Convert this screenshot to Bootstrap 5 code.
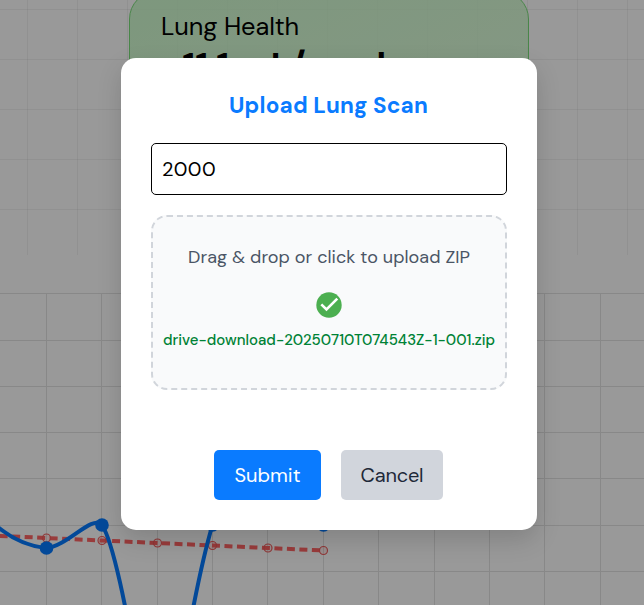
<!DOCTYPE html>
<html lang="en">
<head>
<meta charset="utf-8">
<meta name="viewport" content="width=device-width, initial-scale=1">
<title>Upload Lung Scan</title>
<link rel="stylesheet" href="https://cdn.jsdelivr.net/npm/bootstrap@5.3.0/dist/css/bootstrap.min.css">
<style>
body{font-family:"DM Sans",Inter,"Liberation Sans",sans-serif;height:605px;background:#fff}
.hero-grid{height:255px;padding-left:14px;background:repeating-linear-gradient(90deg,transparent 0 27px,rgba(0,0,0,.05) 27px 28px,transparent 28px 50px),repeating-linear-gradient(180deg,transparent 0 9px,rgba(0,0,0,.05) 9px 10px,transparent 10px 50px)}
.health-card{width:400px;height:200px;margin-top:-9px;padding:20px 31px;border:1px solid #7be07b;border-radius:28px;background:linear-gradient(155deg,rgba(198,252,198,.8),rgba(218,252,215,.8));color:#000}
.health-label{font-size:25.4px;line-height:30px;letter-spacing:-.1px}
.health-value{font-size:35.2px;line-height:48px;font-weight:800;padding-left:1px;margin-top:-1px}
.chart-area{height:350px}
.scrim{background:rgba(0,0,0,.4);padding:58px 0 0 14px}
.upload-panel{width:416px;height:472px;padding:30px;border-radius:15px;box-shadow:0 10px 25px rgba(0,0,0,.15)}
.upload-title{font-size:22.5px;line-height:34px;letter-spacing:.16px;color:#0a7bff;padding:1px 1px 0 0;margin-bottom:20px}
.year-input{height:52px;border:1px solid #000;border-radius:5px;padding:0 10px;font-size:20px;color:#000;letter-spacing:.4px}
.drop-zone{height:175px;margin-top:20px;border:2px dashed #d1d5db;border-radius:16px;background:#f9fafb;padding-top:27px}
.drop-hint{font-size:18px;line-height:27px;letter-spacing:.07px;color:#4a5565}
.check-icon{margin:21px 0 10px}
.file-name{font-size:15px;line-height:24px;font-weight:500;color:#008236}
.action-row{gap:20px;margin:60px 1px 0 0}
.action-btn{height:50px;padding:0;border:0;border-radius:5px;font-size:20px}
.submit-btn{width:107px;background:#0a7bff;color:#fff}
.cancel-btn{width:102px;background:#d1d5dc;color:#1e2939;letter-spacing:-.2px}
</style>
</head>
<body class="overflow-hidden position-relative">
<main>
  <section class="hero-grid d-flex justify-content-center">
    <div class="health-card">
      <div class="health-label"><span>Lung Health</span></div>
      <div class="health-value text-nowrap">-11.1 mL/week</div>
    </div>
  </section>
  <section class="chart-area">
    <svg class="d-block" width="644" height="350" viewBox="0 255 644 350" aria-label="Lung volume chart">
      <path stroke="#e3e3e3" stroke-width="1" fill="none" d="M0 293.5H644M0 340.5H644M0 386.5H644M0 432.5H644M0 478.5H644M0 525.5H644M0 571.5H644M46.5 293V605M101.5 293V605M157.5 293V605M212.5 293V605M267.5 293V605M323.5 293V605M378.5 293V605M434.5 293V605M489.5 293V605M544.5 293V605M600.5 293V605"/>
      <path stroke="#ff6464" stroke-width="4" stroke-dasharray="8 4.5" fill="none" d="M-12.8 535.3L46.5 538L101.5 540.5L157.5 543L212.5 545.5L267.5 548L323.5 550.5"/>
      <g fill="#ff6464" fill-opacity=".12" stroke="#f05c5c" stroke-width="1.2"><circle cx="46.5" cy="538" r="4"/><circle cx="102" cy="540.5" r="4"/><circle cx="157.5" cy="543" r="4"/><circle cx="212.5" cy="545.5" r="4"/><circle cx="268" cy="548" r="4"/><circle cx="323.5" cy="550.5" r="4"/></g>
      <path stroke="#067bff" stroke-width="4" fill="none" d="M-9 521C8 537 25 546 46.5 548C68 546 92 514 102 525C112 540 128 610 137 680M180 680C192 610 204 553 212.5 525"/>
      <g fill="#067bff"><circle cx="46.5" cy="548" r="6.8"/><circle cx="102" cy="525" r="6.8"/><circle cx="212.5" cy="525" r="6.8"/><circle cx="323.5" cy="525" r="6.8"/></g>
    </svg>
  </section>
</main>
<div class="scrim position-absolute top-0 start-0 w-100 h-100 d-flex justify-content-center align-items-start">
  <div class="upload-panel bg-white text-center" role="dialog">
    <h2 class="upload-title fw-bold">Upload Lung Scan</h2>
    <input class="year-input form-control" value="2000" aria-label="Volume">
    <div class="drop-zone d-flex flex-column align-items-center">
      <div class="drop-hint text-nowrap">Drag &amp; drop or click to upload ZIP</div>
      <svg class="check-icon" width="26" height="26" viewBox="0 0 26 26"><circle cx="13" cy="13" r="12.7" fill="#4caf50"/><path d="M5.3 12.3L10.5 17.5L21.3 6.7" fill="none" stroke="#fff" stroke-width="2.6"/></svg>
      <div class="file-name text-nowrap">drive-download-20250710T074543Z-1-001.zip</div>
    </div>
    <div class="action-row d-flex justify-content-center">
      <button class="action-btn submit-btn btn">Submit</button>
      <button class="action-btn cancel-btn btn">Cancel</button>
    </div>
  </div>
</div>
<script src="https://cdn.jsdelivr.net/npm/bootstrap@5.3.0/dist/js/bootstrap.bundle.min.js"></script>
</body>
</html>
